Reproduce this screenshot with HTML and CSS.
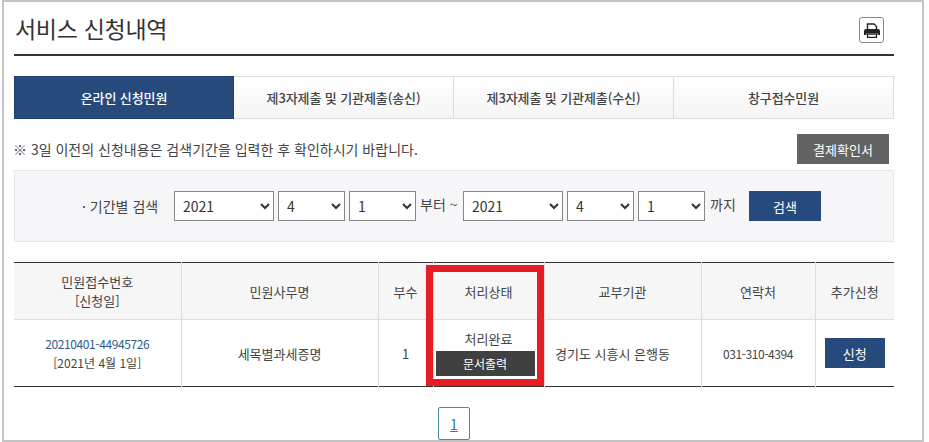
FILE: index.html
```html
<!DOCTYPE html>
<html lang="ko">
<head>
    <meta charset="UTF-8">
    <meta name="viewport" content="width=device-width, initial-scale=1.0">
    <title>서비스 신청내역</title>
    <link rel="stylesheet" href="styles.css">
</head>
<body>
    <div class="frame">
        <div class="title-bar">
            <h1>서비스 신청내역</h1>
            <button class="print-btn" type="button" aria-label="인쇄">
                <svg width="16" height="15" viewBox="0 0 16 15">
                    <path d="M3.5 6V1h6.5l2.5 2.5V6" fill="none" stroke="#222" stroke-width="1.4"/>
                    <path d="M2 6h12a2 2 0 0 1 2 2v4h-2.5v-2h-11v2H0V8a2 2 0 0 1 2-2z" fill="#222"/>
                    <path d="M3.5 11h9v3.3h-9z" fill="none" stroke="#222" stroke-width="1.3"/>
                </svg>
            </button>
        </div>

        <ul class="tabs">
            <li class="tab active">온라인 신청민원</li>
            <li class="tab">제3자제출 및 기관제출(송신)</li>
            <li class="tab">제3자제출 및 기관제출(수신)</li>
            <li class="tab">창구접수민원</li>
        </ul>

        <div class="notice-row">
            <p class="notice">※ 3일 이전의 신청내용은 검색기간을 입력한 후 확인하시기 바랍니다.</p>
            <button class="btn btn-gray" type="button">결제확인서</button>
        </div>

        <form class="search-box">
            <span class="search-label">· 기간별 검색</span>
            <select class="sel sel-year"><option>2021</option></select>
            <select class="sel sel-num"><option>4</option></select>
            <select class="sel sel-num"><option>1</option></select>
            <span class="search-text">부터 ~</span>
            <select class="sel sel-year"><option>2021</option></select>
            <select class="sel sel-num"><option>4</option></select>
            <select class="sel sel-num"><option>1</option></select>
            <span class="search-text until">까지</span>
            <button class="btn btn-navy btn-search" type="button">검색</button>
        </form>

        <div class="table-wrap">
            <table class="list">
                <colgroup>
                    <col class="c1"><col class="c2"><col class="c3"><col class="c4"><col class="c5"><col class="c6"><col class="c7">
                </colgroup>
                <thead>
                    <tr>
                        <th>민원접수번호<br>[신청일]</th>
                        <th>민원사무명</th>
                        <th>부수</th>
                        <th>처리상태</th>
                        <th>교부기관</th>
                        <th>연락처</th>
                        <th>추가신청</th>
                    </tr>
                </thead>
                <tbody>
                    <tr>
                        <td class="small"><a class="num-link" href="#">20210401-44945726</a><br>[2021년 4월 1일]</td>
                        <td>세목별과세증명</td>
                        <td>1</td>
                        <td class="status">처리완료<span class="doc-btn">문서출력</span></td>
                        <td class="office">경기도 시흥시 은행동</td>
                        <td class="small"><span class="phone">031-310-4394</span></td>
                        <td><button class="btn btn-navy btn-apply" type="button">신청</button></td>
                    </tr>
                </tbody>
            </table>
            <div class="highlight"></div>
        </div>

        <div class="pager"><a class="page-num" href="#">1</a></div>
    </div>
</body>
</html>
```

FILE: styles.css
```css
html, body {
    margin: 0;
    height: 442px;
    overflow: hidden;
    background-color: #fff;
}

body {
    font-family: "Noto Sans CJK KR", "Noto Sans", sans-serif;
    font-size: 13px;
    color: #444;
}

.frame {
    box-sizing: border-box;
    width: 922px;
    height: 442px;
    margin-left: 2px;
    padding: 0 28px 0 10px;
    border: 2px solid #c4c4c4;
}

.title-bar {
    display: flex;
    justify-content: space-between;
    align-items: center;
    height: 52px;
    border-bottom: 2px solid #333;
}

h1 {
    margin: 0 0 0 1px;
    font-size: 23px;
    font-weight: 400;
    color: #333;
    letter-spacing: -0.3px;
}

.print-btn {
    display: flex;
    align-items: center;
    justify-content: center;
    width: 25px;
    height: 26px;
    margin: 4px 10px 0 0;
    padding: 0;
    background-color: #fff;
    border: 1px solid #888;
    border-radius: 3px;
}

.tabs {
    display: flex;
    margin: 20px 0 0;
    padding: 0;
    list-style: none;
}

.tab {
    box-sizing: border-box;
    flex: 1;
    height: 43px;
    line-height: 41px;
    text-align: center;
    font-size: 13px;
    font-weight: 500;
    letter-spacing: -0.1px;
    color: #444;
    background: linear-gradient(#fff, #f5f5f5);
    border: 1px solid #ddd;
    border-left: 0;
}

.tab.active {
    flex: none;
    width: 220px;
    color: #fff;
    background: #264a7c;
    border: 1px solid #1f3f6c;
}

.notice-row {
    display: flex;
    justify-content: space-between;
    align-items: center;
    height: 30px;
    margin-top: 15px;
    padding-right: 5px;
}

.notice {
    margin: 0 0 0 -1px;
    font-size: 14px;
    color: #444;
}

.btn {
    padding: 0;
    border: 0;
    color: #fff;
    font-family: inherit;
    font-size: 13px;
}

.btn-gray {
    width: 92px;
    height: 30px;
    background-color: #636363;
}

.btn-navy {
    background-color: #264a7c;
}

.search-box {
    box-sizing: border-box;
    display: flex;
    align-items: center;
    height: 72px;
    margin-top: 6px;
    padding-left: 67px;
    background-color: #f6f6f8;
    border: 1px solid #e8e8e8;
}

.search-label {
    width: 92px;
    font-size: 14px;
}

.sel {
    box-sizing: border-box;
    height: 30px;
    margin-right: 4px;
    padding-left: 4px;
    background-color: #fff;
    border: 1px solid #888;
    border-radius: 0;
    font-family: inherit;
    font-size: 14px;
    color: #333;
}

.sel-year {
    width: 100px;
}

.sel-num {
    width: 67px;
}

.search-text {
    width: 43px;
    margin-top: -4px;
    font-size: 14px;
    white-space: nowrap;
}

.search-text.until {
    width: 36px;
    margin-left: 1px;
}

.btn-search {
    width: 72px;
    height: 30px;
    margin-left: 3px;
}

.table-wrap {
    position: relative;
    margin-top: 20px;
}

.list {
    width: 880px;
    border-collapse: collapse;
    table-layout: fixed;
    border-top: 1px solid #333;
    border-bottom: 1px solid #333;
    text-align: center;
}

.c1 { width: 167px; }
.c2 { width: 197px; }
.c3 { width: 55px; }
.c4 { width: 111px; }
.c5 { width: 157px; }
.c6 { width: 114px; }
.c7 { width: 79px; }

.list th,
.list td {
    padding: 0;
    border-left: 1px solid #ddd;
    font-size: 13px;
    line-height: 19px;
    color: #444;
    font-weight: 400;
}

.list th:first-child,
.list td:first-child {
    border-left: 0;
}

.list th {
    height: 56px;
    background-color: #f6f6f6;
    border-bottom: 1px solid #ddd;
}

.list td {
    height: 66px;
}

.list .small {
    font-size: 12px;
}

.list .office {
    padding-right: 20px;
}

.num-link {
    color: #2f5d8c;
    text-decoration: none;
    letter-spacing: -0.4px;
}

.phone {
    letter-spacing: -0.4px;
}

.list .status {
    line-height: 18px;
}

.doc-btn {
    display: block;
    height: 25px;
    margin: 3px 9px 0 2px;
    line-height: 25px;
    font-size: 12px;
    color: #fff;
    background-color: #404040;
}

.btn-apply {
    width: 60px;
    height: 30px;
}

.highlight {
    position: absolute;
    top: 3px;
    left: 412px;
    box-sizing: border-box;
    width: 118px;
    height: 121px;
    border: 7px solid #e71c24;
}

.pager {
    display: flex;
    justify-content: center;
    margin-top: 20px;
}

.page-num {
    box-sizing: border-box;
    width: 32px;
    height: 33px;
    line-height: 33px;
    text-align: center;
    font-size: 14px;
    color: #2f7ea3;
    border: 1px solid #4a8ba8;
    border-radius: 2px;
}
```
